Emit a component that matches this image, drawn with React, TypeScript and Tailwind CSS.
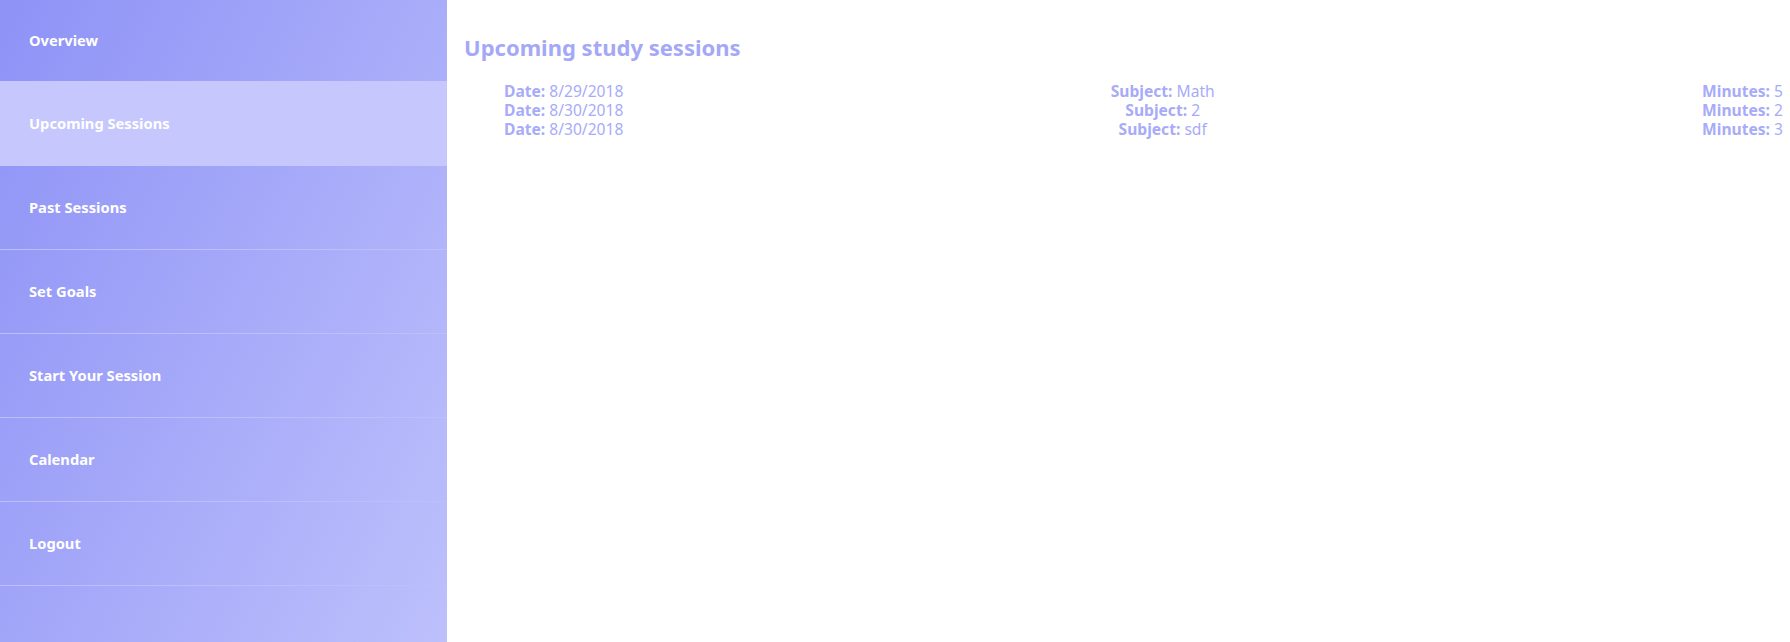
import React from "react";

const items = [
  "Overview",
  "Upcoming Sessions",
  "Past Sessions",
  "Set Goals",
  "Start Your Session",
  "Calendar",
  "Logout",
];

const sessions = [
  { date: "8/29/2018", subject: "Math", minutes: "5" },
  { date: "8/30/2018", subject: "2", minutes: "2" },
  { date: "8/30/2018", subject: "sdf", minutes: "3" },
];

export default function App() {
  return (
    <div
      className="flex h-[642px] w-full bg-white"
      style={{ fontFamily: '"Noto Sans", "Open Sans", sans-serif' }}
    >
      <nav className="w-[447px] shrink-0 h-full bg-[linear-gradient(116deg,#8e92f6,#bdc0fb)]">
        {items.map((label, i) => (
          <div
            key={label}
            className={
              (i === 0
                ? "h-[81px] "
                : i === 1
                ? "h-[85px] bg-[#c5c7fd] "
                : "h-[84px] border-b border-[#bcbff9] ") +
              "flex items-center pl-[29px] text-white font-bold text-[14.7px]"
            }
          >
            {label}
          </div>
        ))}
      </nav>
      <main className="flex-1 pl-[17px] pr-[7px] pt-[32px] text-[#a7abf8]">
        <h2 className="text-[22px] font-bold leading-[30px] text-[#a4a8f6]">
          Upcoming study sessions
        </h2>
        <div className="mt-[20px] ml-[40px] flex justify-between text-[15.6px] leading-[19px]">
          <div className="text-left">
            {sessions.map((s, i) => (
              <div key={i}>
                <span className="font-bold">Date:</span> {s.date}
              </div>
            ))}
          </div>
          <div className="text-center">
            {sessions.map((s, i) => (
              <div key={i}>
                <span className="font-bold">Subject:</span> {s.subject}
              </div>
            ))}
          </div>
          <div className="text-right">
            {sessions.map((s, i) => (
              <div key={i}>
                <span className="font-bold">Minutes:</span> {s.minutes}
              </div>
            ))}
          </div>
        </div>
      </main>
    </div>
  );
}
